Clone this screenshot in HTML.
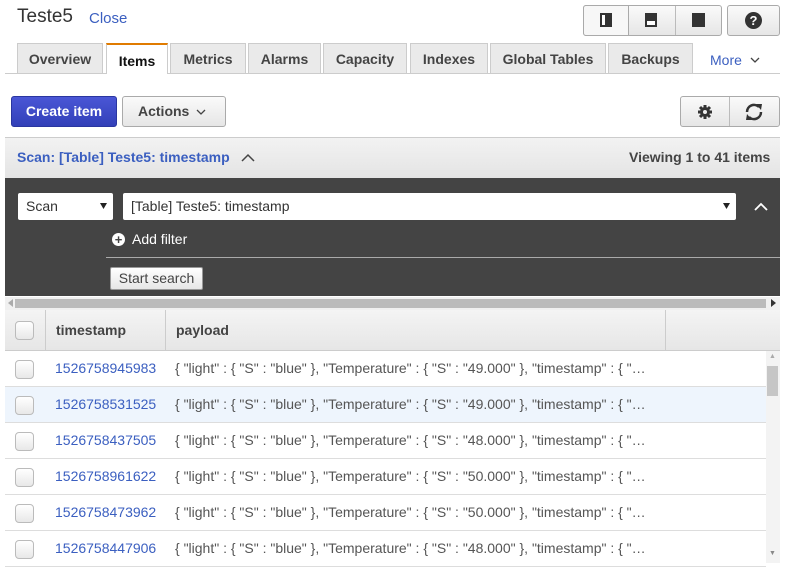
<!DOCTYPE html>
<html><head><style>
*{box-sizing:border-box;margin:0;padding:0}
body{width:790px;height:565px;overflow:hidden;background:#fff;font-family:"Liberation Sans",Arial,sans-serif;font-size:14px;color:#444;position:relative}
.a{position:absolute}
.tab{position:absolute;top:43px;height:30px;background:#eaeaea;border:1px solid #ccc;border-bottom:none;font-weight:bold;color:#444;text-align:center;line-height:31px;font-size:14px}
.btn{position:absolute;border:1px solid #aaa;border-radius:3px;background:linear-gradient(#fafafa,#e6e6e6);font-weight:bold;color:#444;text-align:center}
.row{position:absolute;left:5px;width:761px;height:36px;border-bottom:1px solid #ddd}
.cb{position:absolute;left:10px;top:9px;width:19px;height:19px;border:1px solid #bbb;border-radius:4px;background:linear-gradient(#fff,#e8e8e8)}
.ts{position:absolute;left:50px;top:9px;color:#3b5fc0}
.pl{position:absolute;left:170px;top:9px;width:475px;white-space:nowrap;overflow:hidden;color:#555}
svg{position:absolute}
</style></head><body>
<div class="a" style="left:17px;top:6px;font-size:19px;color:#333">Teste5</div>
<div class="a" style="left:89px;top:10px;font-size:15px;color:#3b5fc0">Close</div>
<div class="btn" style="left:583px;top:5px;width:139px;height:31px"></div>
<div class="a" style="left:583px;top:5px;width:46px;height:31px;background:#f7f7f7;border:1px solid #aaa;border-radius:3px 0 0 3px"></div>
<div class="a" style="left:675px;top:6px;width:1px;height:29px;background:#bbb"></div>
<div class="a" style="left:600px;top:13px;width:12px;height:14px;border:2px solid #333;border-right-width:7px;background:#fff"></div>
<div class="a" style="left:645px;top:13px;width:12px;height:14px;border:2px solid #333;border-top-width:8px;background:#fff"></div>
<div class="a" style="left:692px;top:13px;width:13px;height:14px;background:#333"></div>
<div class="btn" style="left:727px;top:5px;width:53px;height:31px"></div>
<div class="a" style="left:745px;top:12px;width:17px;height:17px;border-radius:50%;background:#333;color:#fff;font-weight:bold;font-size:13px;text-align:center;line-height:17px">?</div>

<div class="a" style="left:5px;top:73px;width:775px;height:1px;background:#ccc"></div>
<div class="tab" style="left:17px;width:86px">Overview</div>
<div class="tab" style="left:106px;width:62px;height:31px;background:#fff;border-top:2px solid #e07b00;color:#111;line-height:32px">Items</div>
<div class="tab" style="left:170px;width:76px">Metrics</div>
<div class="tab" style="left:248px;width:73px">Alarms</div>
<div class="tab" style="left:323px;width:84px">Capacity</div>
<div class="tab" style="left:410px;width:78px">Indexes</div>
<div class="tab" style="left:490px;width:116px">Global Tables</div>
<div class="tab" style="left:608px;width:85px">Backups</div>
<div class="a" style="left:710px;top:52px;color:#3b5fc0">More</div>
<svg style="left:750px;top:57px" width="10" height="6"><path d="M1 1L5 5L9 1" fill="none" stroke="#444" stroke-width="1.3"/></svg>

<div class="a" style="left:11px;top:96px;width:106px;height:31px;border-radius:3px;background:linear-gradient(#4a56d6,#3240b8);border:1px solid #2a36a0;color:#fff;font-weight:bold;text-align:center;line-height:29px">Create item</div>
<div class="btn" style="left:122px;top:96px;width:104px;height:31px;line-height:29px;text-align:left;padding-left:15px">Actions</div>
<svg style="left:196px;top:109px" width="10" height="6"><path d="M1 1L5 5L9 1" fill="none" stroke="#444" stroke-width="1.3"/></svg>
<div class="btn" style="left:680px;top:96px;width:100px;height:31px"></div>
<div class="a" style="left:729px;top:97px;width:1px;height:29px;background:#bbb"></div>
<svg style="left:697px;top:104px" width="16" height="16" viewBox="0 0 16 16"><circle cx="8" cy="8" r="5" fill="#333"/><g stroke="#333" stroke-width="3"><path d="M8 1V15M1 8H15M3 3L13 13M13 3L3 13"/></g><circle cx="8" cy="8" r="2" fill="#eee"/></svg>
<svg style="left:743px;top:101px" width="22" height="22" viewBox="0 0 22 22"><path d="M4 11A7 7 0 0 1 16 6" fill="none" stroke="#333" stroke-width="2.5"/><path d="M18 11A7 7 0 0 1 6 16" fill="none" stroke="#333" stroke-width="2.5"/><path d="M13 3L19 3L18 9Z" fill="#333"/><path d="M9 19L3 19L4 13Z" fill="#333"/></svg>

<div class="a" style="left:5px;top:137px;width:775px;height:41px;background:linear-gradient(#f2f2f2,#e4e4e4);border-top:1px solid #ccc"></div>
<div class="a" style="left:17px;top:149px;color:#3b5fc0;font-weight:bold">Scan: [Table] Teste5: timestamp</div>
<svg style="left:241px;top:153px" width="14" height="9"><path d="M1 8L7 2L13 8" fill="none" stroke="#444" stroke-width="1.5"/></svg>
<div class="a" style="left:629px;top:149px;color:#444;font-weight:bold">Viewing 1 to 41 items</div>

<div class="a" style="left:5px;top:178px;width:775px;height:118px;background:#444"></div>
<div class="a" style="left:18px;top:193px;width:95px;height:27px;background:#fff;border-radius:2px;padding:5px 8px;color:#333">Scan</div>
<svg style="left:100px;top:203px" width="7" height="6"><path d="M0 0H7L3.5 6Z" fill="#222"/></svg>
<div class="a" style="left:123px;top:193px;width:613px;height:27px;background:#fff;border-radius:2px;padding:5px 8px;color:#333">[Table] Teste5: timestamp</div>
<svg style="left:723px;top:203px" width="7" height="6"><path d="M0 0H7L3.5 6Z" fill="#222"/></svg>
<svg style="left:754px;top:202px" width="14" height="9"><path d="M1 8L7 2L13 8" fill="none" stroke="#fff" stroke-width="1.8"/></svg>
<div class="a" style="left:112px;top:233px;width:13px;height:13px;border-radius:50%;background:#fff;color:#444;font-weight:bold;font-size:13px;line-height:13px;text-align:center">+</div>
<div class="a" style="left:132px;top:231px;color:#fff">Add filter</div>
<div class="a" style="left:106px;top:257px;width:674px;height:1px;background:#aaa"></div>
<div class="a" style="left:110px;top:267px;width:93px;height:23px;background:linear-gradient(#fff,#e6e6e6);border-radius:2px;border:1px solid #999;text-align:center;line-height:21px;color:#444">Start search</div>

<div class="a" style="left:5px;top:297px;width:775px;height:13px;background:#f0f0f0"></div>
<div class="a" style="left:15px;top:299px;width:751px;height:9px;background:#bbb"></div>
<svg style="left:8px;top:299px" width="5" height="8"><path d="M5 0V8L0 4Z" fill="#aaa"/></svg>
<svg style="left:771px;top:299px" width="5" height="8"><path d="M0 0V8L5 4Z" fill="#333"/></svg>

<div class="a" style="left:5px;top:310px;width:775px;height:41px;background:linear-gradient(#f4f4f4,#e6e6e6);border-bottom:1px solid #ccc"></div>
<div class="a" style="left:45px;top:310px;width:1px;height:40px;background:#ccc"></div>
<div class="a" style="left:165px;top:310px;width:1px;height:40px;background:#ccc"></div>
<div class="a" style="left:665px;top:310px;width:1px;height:40px;background:#ccc"></div>
<div class="cb" style="left:15px;top:321px"></div>
<div class="a" style="left:56px;top:322px;font-weight:bold">timestamp</div>
<div class="a" style="left:176px;top:322px;font-weight:bold">payload</div>

<div class="a" style="left:766px;top:351px;width:14px;height:212px;background:#f3f3f3"></div>
<div class="a" style="left:767px;top:366px;width:11px;height:30px;background:#c6c6c6"></div>
<div class="a" style="left:769px;top:353px;font-size:7px;color:#aaa">&#9650;</div>
<div class="a" style="left:769px;top:550px;font-size:7px;color:#888">&#9660;</div>

<div class="row" style="top:351px"><div class="cb"></div><div class="ts">1526758945983</div><div class="pl">{ "light" : { "S" : "blue" }, "Temperature" : { "S" : "49.000" }, "timestamp" : { "…</div></div>
<div class="row" style="top:387px;background:#eef5fd"><div class="cb"></div><div class="ts">1526758531525</div><div class="pl">{ "light" : { "S" : "blue" }, "Temperature" : { "S" : "49.000" }, "timestamp" : { "…</div></div>
<div class="row" style="top:423px"><div class="cb"></div><div class="ts">1526758437505</div><div class="pl">{ "light" : { "S" : "blue" }, "Temperature" : { "S" : "48.000" }, "timestamp" : { "…</div></div>
<div class="row" style="top:459px"><div class="cb"></div><div class="ts">1526758961622</div><div class="pl">{ "light" : { "S" : "blue" }, "Temperature" : { "S" : "50.000" }, "timestamp" : { "…</div></div>
<div class="row" style="top:495px"><div class="cb"></div><div class="ts">1526758473962</div><div class="pl">{ "light" : { "S" : "blue" }, "Temperature" : { "S" : "50.000" }, "timestamp" : { "…</div></div>
<div class="row" style="top:531px"><div class="cb"></div><div class="ts">1526758447906</div><div class="pl">{ "light" : { "S" : "blue" }, "Temperature" : { "S" : "48.000" }, "timestamp" : { "…</div></div>
</body></html>
